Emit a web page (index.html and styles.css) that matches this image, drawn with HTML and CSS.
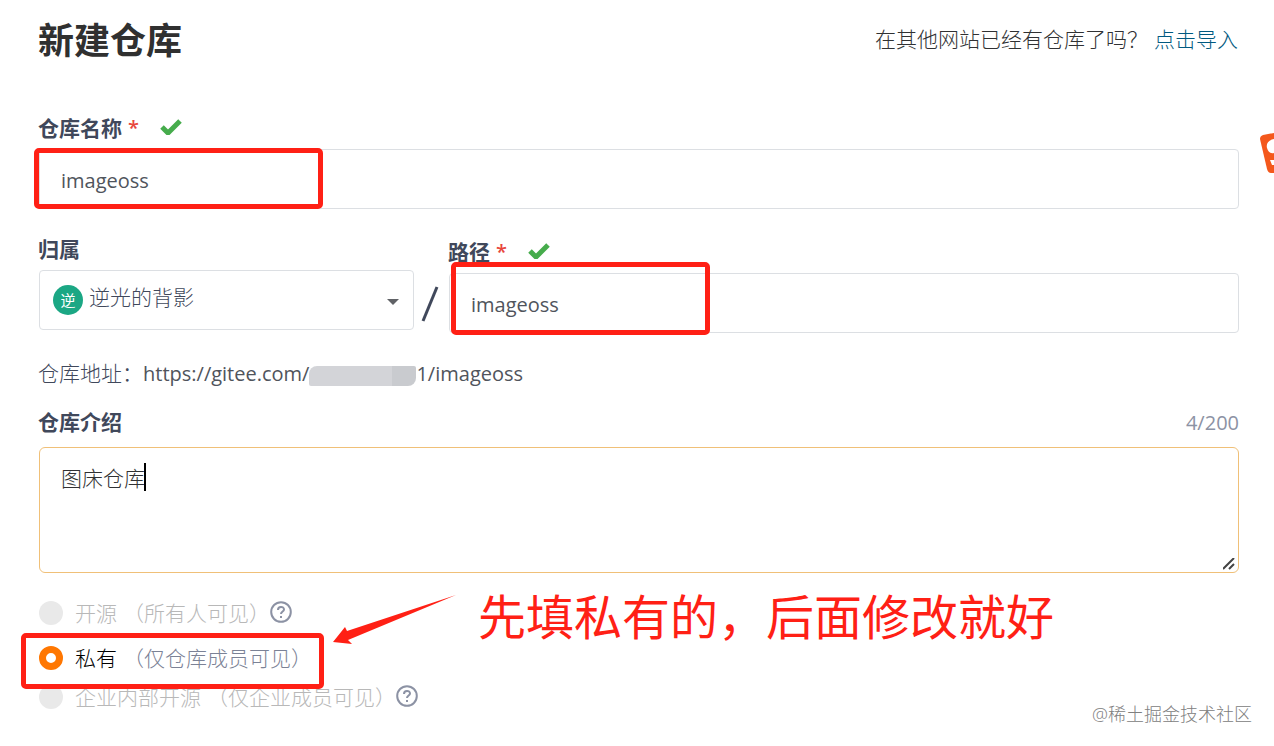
FILE: index.html
```html
<!DOCTYPE html>
<html lang="zh-Hans">
<head>
  <meta charset="UTF-8" />
  <meta name="viewport" content="width=device-width, initial-scale=1.0" />
  <title>新建仓库</title>
  <link rel="stylesheet" href="styles.css">
</head>
<body>

  <div class="container">
    <header class="header">
      <h1>新建仓库</h1>
      <p class="import">在其他网站已经有仓库了吗？<a href="#">点击导入</a></p>
    </header>

    <form>
      <div class="field name-field">
        <div class="label-row">
          <label for="name">仓库名称</label>
          <span class="required">*</span>
          <svg class="check" viewBox="0 0 22 16"><path d="M2 8l6 6L20 2" /></svg>
        </div>
        <div class="control">
          <input type="text" id="name" value="imageoss">
          <div class="mark mark-name"></div>
        </div>
      </div>

      <div class="path-row">
        <div class="field owner-field">
          <div class="label-row">
            <label for="owner">归属</label>
          </div>
          <div class="control">
            <select id="owner">
              <option>逆光的背影</option>
            </select>
            <span class="avatar">逆</span>
            <svg class="arrow" viewBox="0 0 12 6"><path d="M0 0h12L6 6z" /></svg>
          </div>
        </div>
        <svg class="slash" viewBox="0 0 18 36"><path d="M2 35L16 1" /></svg>
        <div class="field path-field">
          <div class="label-row">
            <label for="path">路径</label>
            <span class="required">*</span>
            <svg class="check" viewBox="0 0 22 16"><path d="M2 8l6 6L20 2" /></svg>
          </div>
          <div class="control">
            <input type="text" id="path" value="imageoss">
            <div class="mark mark-path"></div>
          </div>
        </div>
      </div>

      <p class="address">仓库地址：<span class="url">https://gitee.com/</span><span class="mosaic"></span><span class="url">1/imageoss</span></p>

      <div class="field">
        <div class="label-row intro-label">
          <label for="intro">仓库介绍</label>
          <span class="count">4/200</span>
        </div>
        <div class="control">
          <textarea id="intro">图床仓库</textarea>
          <span class="cursor"></span>
          <svg class="resizer" viewBox="0 0 12 12"><path d="M0 11L11 0M6 11l5-5" /></svg>
        </div>
      </div>

      <div class="options">
        <div class="option disabled">
          <input type="radio" name="visible" id="open" disabled>
          <label for="open">开源<span>（所有人可见）</span></label>
          <svg class="help" viewBox="0 0 22 22"><circle cx="11" cy="11" r="9.8" /><path d="M8 9c0-4 6-4 6-.5 0 2-3 2-3 4.500M11 15v2" /></svg>
        </div>
        <div class="option private">
          <input type="radio" name="visible" id="private" checked>
          <label for="private">私有<span>（仅仓库成员可见）</span></label>
          <div class="mark mark-private"></div>
        </div>
        <div class="option disabled">
          <input type="radio" name="visible" id="inner" disabled>
          <label for="inner">企业内部开源<span>（仅企业成员可见）</span></label>
          <svg class="help" viewBox="0 0 22 22"><circle cx="11" cy="11" r="9.8" /><path d="M8 9c0-4 6-4 6-.5 0 2-3 2-3 4.500M11 15v2" /></svg>
        </div>
        <svg class="pointer" viewBox="0 0 124 52"><path d="M124 1L16 46l4 4-19-2 12-15 2 4z" /></svg>
        <p class="note">先填私有的，后面修改就好</p>
      </div>
    </form>
  </div>

  <svg class="side-logo" viewBox="0 0 14 42">
    <path class="logo-bg" d="M14 1L3 3Q0 4 0 7l7 30q1 4 4 4h3z" />
    <path class="logo-fg" d="M14 7C8 8 6 12 7 16s4 6 7 5zM10 28h4v5h-2z" />
  </svg>
  <p class="watermark">@稀土掘金技术社区</p>

</body>
</html>
```
FILE: styles.css
```css
:root {
  --text: #40485b;
  --muted: #8c92a4;
  --line: #dcdfe3;
  --red: #ff2015;
  --green: #46ac4c;
  --orange: #ff7701;
}
* { box-sizing: border-box; }
body {
  margin: 0;
  position: relative;
  min-height: 100vh;
  overflow-x: hidden;
  font-family: "Open Sans", "Noto Sans CJK SC", sans-serif;
  font-size: 21px;
  font-weight: 300;
  line-height: 28px;
  color: var(--text);
  background: #fff;
}
h1, p { margin: 0; }
.container {
  padding: 20px 36px 0 38px;
}
.header {
  display: flex;
  justify-content: space-between;
  height: 42px;
  margin-bottom: 52px;
}
h1 {
  font-size: 36px;
  line-height: 42px;
  font-weight: bold;
  color: #303030;
}
.import {
  padding-top: 5px;
  color: #303133;
}
.import a {
  margin-left: 6px;
  color: #005980;
  text-decoration: none;
}

/* 表单 */
form {
  margin-right: -1px;
}
.label-row {
  display: flex;
  align-items: center;
  height: 28px;
  margin-bottom: 7px;
}
.label-row label {
  font-weight: bold;
}
.required {
  margin-left: 6px;
  font-size: 20px;
  font-weight: 600;
  color: #e8463c;
}
.check {
  width: 22px;
  height: 16px;
  margin: 0 0 2px 21px;
  fill: none;
  stroke: var(--green);
  stroke-width: 5;
}
.control {
  position: relative;
  margin-left: 1px;
}
input[type="text"], select, textarea {
  display: block;
  width: 100%;
  height: 60px;
  margin: 0;
  padding: 0 21px;
  border: 1px solid var(--line);
  border-radius: 4px;
  outline: none;
  background: #fff;
  font: inherit;
  color: var(--text);
}
input[type="text"] {
  padding-top: 2px;
  font-size: 20px;
  font-weight: 400;
  color: #50545c;
}
.path-row {
  display: flex;
  margin-top: 26px;
}
.owner-field {
  flex: 0 0 376px;
}
.path-field {
  flex: 1;
  padding-top: 3px;
}
.slash {
  flex: none;
  width: 18px;
  height: 36px;
  margin: 51px 9px 0 7px;
  fill: none;
  stroke: var(--text);
  stroke-width: 3;
}
select {
  appearance: none;
  padding: 0 40px 6px 49px;
}
.avatar {
  position: absolute;
  left: 14px;
  top: 15px;
  width: 30px;
  height: 30px;
  border-radius: 50%;
  background: #1ba784;
  color: #fff;
  font-size: 15px;
  font-weight: 400;
  line-height: 30px;
  text-align: center;
}
.arrow {
  position: absolute;
  right: 15px;
  top: 29px;
  width: 12px;
  height: 6px;
  fill: #606266;
}
.address {
  display: flex;
  align-items: center;
  margin-top: 25px;
}
.url {
  padding-top: 2px;
  font-size: 20px;
  font-weight: 400;
  color: #50545c;
}
.mosaic {
  width: 107px;
  height: 20px;
  margin: 6px 0 0;
  border-radius: 8px 2px 8px 2px;
  background: linear-gradient(to right, #d3d4d8 78%, #c9cbcf 78%);
}
.intro-label {
  justify-content: space-between;
  margin: 20px 0 11px;
}
.count {
  padding-top: 2px;
  font-size: 20px;
  font-weight: 400;
  color: var(--muted);
}
textarea {
  height: 126px;
  padding: 16px 21px;
  border-color: #f0c078;
  border-radius: 6px;
  resize: none;
  color: #303133;
}
.cursor {
  position: absolute;
  left: 105px;
  top: 16px;
  width: 2px;
  height: 28px;
  background: #000;
}
.resizer {
  position: absolute;
  right: 4px;
  bottom: 3px;
  width: 12px;
  height: 12px;
  fill: none;
  stroke: #444;
  stroke-width: 2;
}

/* 可见范围 */
.options {
  position: relative;
  margin-left: 1px;
  padding-top: 26px;
}
.option {
  position: relative;
  display: flex;
  align-items: center;
  height: 28px;
  margin-bottom: 11px;
}
.option.private {
  margin-top: 17px;
}
.option input {
  appearance: none;
  width: 24px;
  height: 24px;
  margin: 0 12px 0 0;
  border-radius: 50%;
  background: #e9e9e9;
}
.option input:checked {
  border: 7px solid var(--orange);
  background: #fff;
}
.option label {
  color: #000;
}
.option label span {
  margin-left: 6px;
  color: #7b8296;
}
.option.disabled label, .option.disabled span {
  color: #b8b8b8;
}
.help {
  width: 22px;
  height: 22px;
  margin: 0 0 2px;
  fill: none;
  stroke: var(--muted);
  stroke-width: 2;
}

/* 红色标注 */
.mark {
  position: absolute;
  border: 5px solid var(--red);
  border-radius: 5px;
  pointer-events: none;
}
.mark-name {
  left: -5px;
  top: -1px;
  width: 289px;
  height: 61px;
}
.mark-path {
  left: 2px;
  top: -11px;
  width: 259px;
  height: 73px;
}
.mark-private {
  z-index: 1;
  left: -18px;
  top: -11px;
  width: 303px;
  height: 56px;
}
.pointer {
  position: absolute;
  left: 293px;
  top: 21px;
  width: 124px;
  height: 52px;
  fill: var(--red);
}
.note {
  position: absolute;
  left: 439px;
  top: 16px;
  font-size: 48px;
  font-weight: 400;
  line-height: 56px;
  color: var(--red);
  white-space: nowrap;
}
.side-logo {
  position: absolute;
  right: 0;
  top: 132px;
  width: 14px;
  height: 42px;
}
.logo-bg { fill: #f4581c; }
.logo-fg { fill: #fff; }
.watermark {
  position: absolute;
  right: 22px;
  bottom: 18px;
  font-size: 18px;
  color: #808080;
}
```
